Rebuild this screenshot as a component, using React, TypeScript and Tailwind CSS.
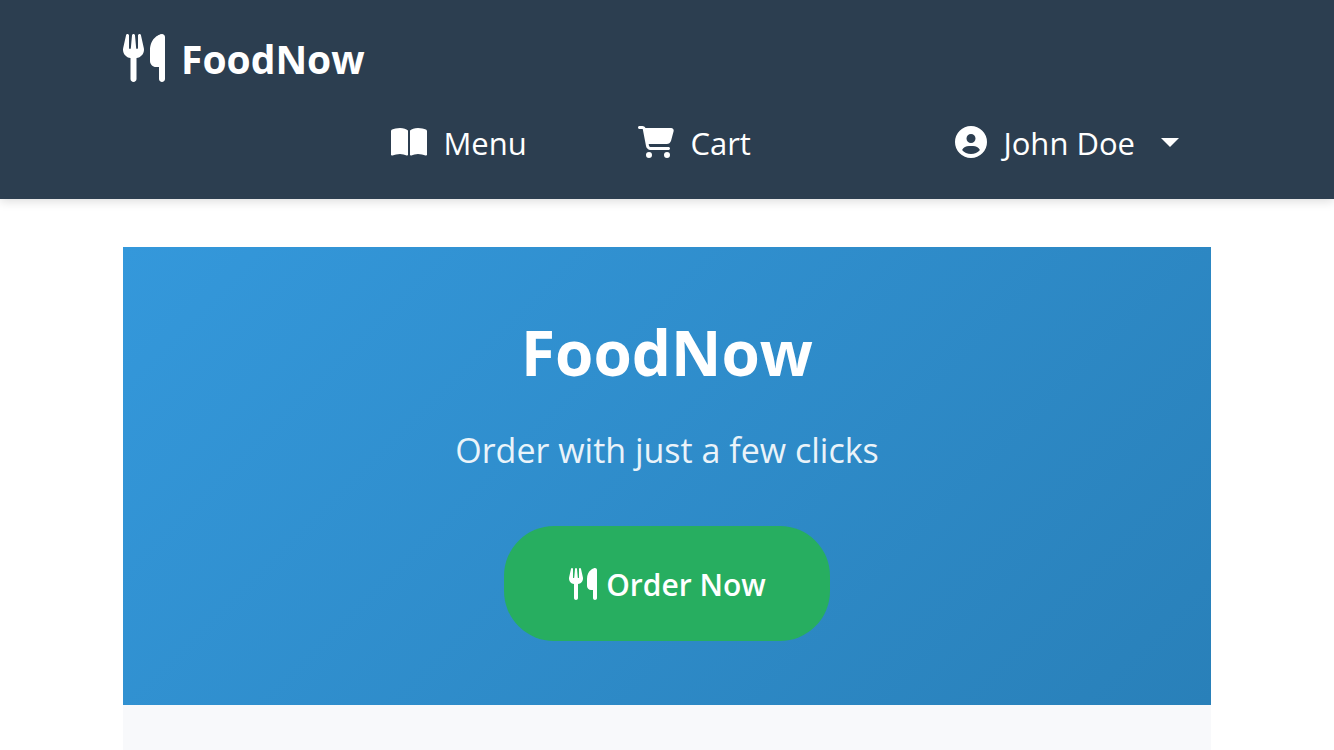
import { FaBookOpen, FaCartShopping, FaCircleUser, FaUtensils } from "react-icons/fa6";

function Header() {
  return (
    <header className="relative bg-[#2c3e50] shadow-[0_2px_10px_rgba(0,0,0,0.15)]">
      <nav className="mx-auto flex max-w-[1136px] flex-col gap-4 px-6 pt-6 pb-[23px]">
        <a href="#home" className="flex h-[68px] items-center gap-4 self-start text-[39px] font-bold">
          <FaUtensils className="h-12 w-[42px]" aria-hidden="true" />
          <span className="pt-0.5">FoodNow</span>
        </a>
        <ul className="flex h-[68px] items-center justify-end pr-8 text-[31px]">
          <li className="w-[247px]">
            <a href="#menu" className="flex items-center gap-4">
              <FaBookOpen className="h-8 w-9" aria-hidden="true" />
              <span className="pt-0.5">Menu</span>
            </a>
          </li>
          <li className="w-[317px]">
            <a href="#cart" className="flex items-center gap-4">
              <FaCartShopping className="h-8 w-9" aria-hidden="true" />
              <span className="pt-0.5">Cart</span>
            </a>
          </li>
          <li>
            <button type="button" aria-haspopup="menu" className="flex items-center">
              <FaCircleUser className="size-8" aria-hidden="true" />
              <span className="ml-4 pt-0.5">John Doe</span>
              <svg className="ml-[26px] h-[9px] w-[18px]" viewBox="0 0 18 9" fill="currentColor" aria-hidden="true">
                <path d="M0 0h18L9 9z" />
              </svg>
            </button>
          </li>
        </ul>
      </nav>
    </header>
  );
}

function Hero() {
  return (
    <section className="flex flex-col items-center bg-linear-[135deg,#3498db,#2980b9] px-8 py-16 text-center">
      <h1 className="text-[62px] font-bold leading-[82px]">FoodNow</h1>
      <p className="mt-[30px] text-[34px] leading-[55px] opacity-90">Order with just a few clicks</p>
      <button
        type="button"
        className="mt-12 flex items-center gap-2 rounded-[50px] bg-[#27ae60] px-16 py-8 text-[30px] font-semibold leading-[49px]"
      >
        <FaUtensils className="h-8 w-[30px]" aria-hidden="true" />
        <span className="pt-0.5">Order Now</span>
      </button>
    </section>
  );
}

export default function App() {
  return (
    <div className="h-screen overflow-hidden bg-white font-['Open_Sans','Noto_Sans',sans-serif] text-white">
      <Header />
      <main className="mx-auto mt-12 max-w-[1136px] px-6">
        <Hero />
        <section className="h-96 bg-[#f8f9fb]" />
      </main>
    </div>
  );
}
